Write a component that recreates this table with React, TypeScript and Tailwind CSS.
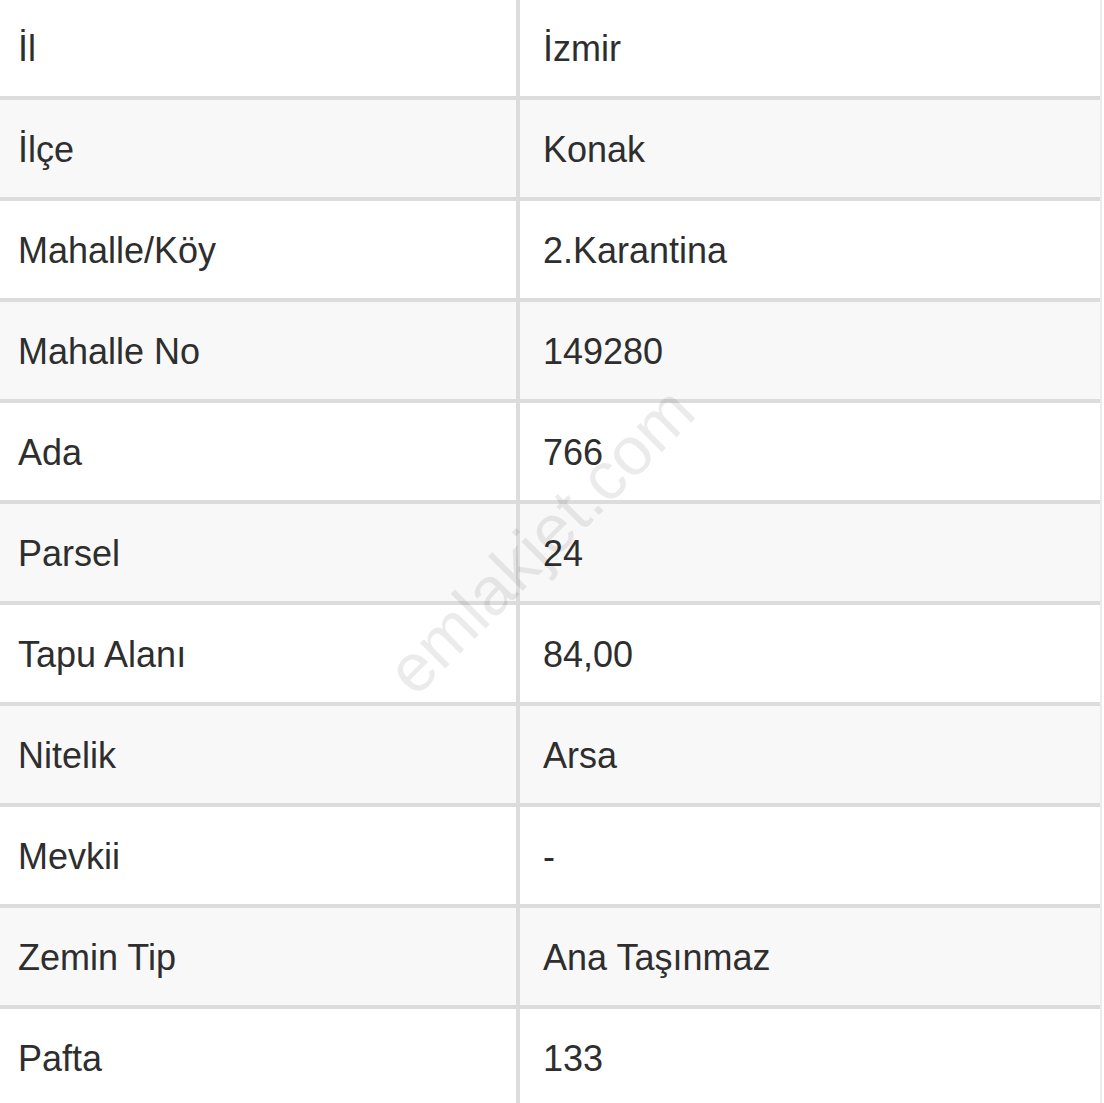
const rows: [string, string][] = [
  ["İl", "İzmir"],
  ["İlçe", "Konak"],
  ["Mahalle/Köy", "2.Karantina"],
  ["Mahalle No", "149280"],
  ["Ada", "766"],
  ["Parsel", "24"],
  ["Tapu Alanı", "84,00"],
  ["Nitelik", "Arsa"],
  ["Mevkii", "-"],
  ["Zemin Tip", "Ana Taşınmaz"],
  ["Pafta", "133"],
];

export default function App() {
  return (
    <div
      className="relative w-[1104px] h-[1103px] overflow-hidden bg-white text-[#2e2e2e]"
      style={{ fontFamily: '"Liberation Sans", Arial, sans-serif' }}
    >
      <div className="flex flex-col w-[1102px] border-r-2 border-[#ececec]">
        {rows.map(([label, value], i) => (
          <div
            key={label}
            className={`flex shrink-0 border-b-4 border-[#dcdcdc] ${
              i === 0 ? "h-[100px]" : "h-[101px]"
            } ${i % 2 === 1 ? "bg-[#f8f8f8]" : "bg-white"}`}
          >
            <div className="w-[520px] shrink-0 flex items-center pl-[18px] pt-[2px] border-r-4 border-[#dcdcdc] text-[36px] leading-none">
              {label}
            </div>
            <div className="flex-1 flex items-center pl-[23px] pt-[2px] text-[36px] leading-none">
              {value}
            </div>
          </div>
        ))}
      </div>

      <div className="pointer-events-none absolute left-[540px] top-[540px] -translate-x-1/2 -translate-y-1/2 -rotate-45 whitespace-nowrap text-[68px] font-light leading-none text-black/[0.08]">
        emlakjet.com
      </div>
    </div>
  );
}
